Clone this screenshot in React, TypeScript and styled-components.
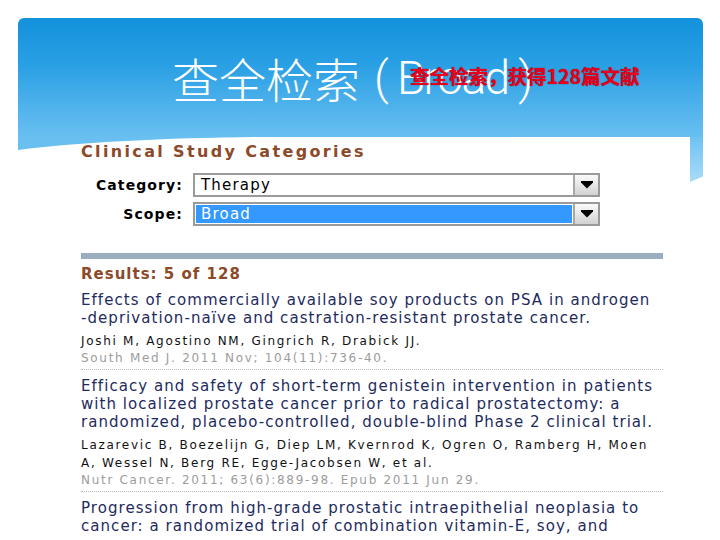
import React from 'react'
import styled, { createGlobalStyle } from 'styled-components'

const GlobalStyle = createGlobalStyle`
  html, body {
    margin: 0;
    padding: 0;
    background: #fff;
    overflow: hidden;
  }
`

const Slide = styled.div`
  width: 685px;
  margin: 18px 0 0 18px;
  display: flex;
  flex-direction: column;
`

const Header = styled.header`
  position: relative;
  height: 119px;
  padding-left: 154px;
  display: flex;
  align-items: center;
  border-radius: 6px 6px 0 0;
  background: linear-gradient(180deg, #1391dc 0%, #2aa0e4 40%, #55b5ed 80%, #68bff0 100%);
`

const Title = styled.h1`
  margin: 0;
  color: #fff;
  font-family: 'Noto Sans CJK SC', 'Noto Sans', sans-serif;
  font-weight: 300;
  font-size: 47px;
  line-height: 1;
  white-space: nowrap;
  display: flex;
  align-items: center;
`

const Latin = styled.span`
  margin-left: 14px;
  font-family: Roboto, 'Noto Sans', sans-serif;
  font-weight: 300;
  font-size: 46px;
  letter-spacing: -1.5px;
  white-space: pre;
`

const Note = styled.div`
  position: absolute;
  left: 392px;
  top: 45px;
  color: #e6001e;
  font-family: 'Noto Sans CJK SC', sans-serif;
  font-weight: 700;
  font-size: 19.5px;
  line-height: 26px;
  white-space: nowrap;
  text-shadow: 0 0 1px #6a0008;
`

const Wedge = styled.svg`
  position: absolute;
  left: 0;
  top: 100%;
  display: block;
`

const Body = styled.div`
  display: flex;
  align-items: flex-start;
`

const Shot = styled.main`
  flex: 1;
  padding: 5px 27px 0 63px;
  font-family: 'DejaVu Sans', 'Liberation Sans', sans-serif;
`

const Edge = styled.div`
  width: 13px;
  height: 45px;
  background: linear-gradient(180deg, #6fc2f2, #a9dbf8);
  clip-path: polygon(0 0, 100% 0, 100% 88%, 0 100%);
`

const SectionHead = styled.h2<{ $size: number; $spacing: number }>`
  margin: 0;
  color: #8b4a2a;
  font-size: ${p => p.$size}px;
  letter-spacing: ${p => p.$spacing}px;
  font-weight: 700;
  line-height: 20px;
  white-space: nowrap;
`

const Form = styled.div`
  margin-top: 11px;
  display: grid;
  grid-template-columns: 102px 407px;
  column-gap: 10px;
  row-gap: 5px;
  align-items: center;
`

const Label = styled.label`
  justify-self: end;
  color: #000;
  font-size: 14px;
  font-weight: 700;
  letter-spacing: 1.1px;
  margin-left: 15px;
`

const SelectBox = styled.div`
  display: flex;
  height: 24px;
  box-sizing: border-box;
  border: 2px solid #9a9a9a;
  background: #fff;
`

const Value = styled.div<{ $selected?: boolean }>`
  flex: 1;
  margin: 1px;
  padding-left: 5px;
  display: flex;
  align-items: center;
  font-size: 15px;
  letter-spacing: 1.2px;
  color: ${p => (p.$selected ? '#fff' : '#000')};
  background: ${p => (p.$selected ? '#3399ff' : '#fff')};
`

const Arrow = styled.div`
  width: 25px;
  box-sizing: border-box;
  border-left: 2px solid #a8a8a8;
  background: linear-gradient(180deg, #fafafa, #d2d2d2);
  display: flex;
  align-items: center;
  justify-content: center;
`

const Rule = styled.div`
  margin-top: 27px;
  height: 6px;
  background: #9aaec0;
`

const Results = styled(SectionHead)`
  margin-top: 6px;
  line-height: 18px;
`

const List = styled.div`
  display: flex;
  flex-direction: column;
  padding-top: 1px;
`

const Item = styled.article`
  margin-top: 7px;
`

const ItemTitle = styled.div`
  color: #1e2b5e;
  font-size: 15px;
  letter-spacing: 1.05px;
  line-height: 18px;
  white-space: nowrap;
`

const Authors = styled.div`
  margin-top: 5px;
  color: #111;
  font-size: 12px;
  letter-spacing: 1.7px;
  line-height: 18px;
  white-space: nowrap;
`

const Cite = styled.div`
  color: #9c9c9c;
  font-size: 12px;
  letter-spacing: 1.7px;
  line-height: 17px;
  white-space: nowrap;
`

const Divider = styled.hr`
  margin: 2px 0 0;
  border: 0;
  border-top: 1px dotted #b8b8b8;
`

type Paper = {
  title: string[]
  authors?: string[]
  cite?: string
}

const papers: Paper[] = [
  {
    title: [
      'Effects of commercially available soy products on PSA in androgen',
      '-deprivation-naïve and castration-resistant prostate cancer.',
    ],
    authors: ['Joshi M, Agostino NM, Gingrich R, Drabick JJ.'],
    cite: 'South Med J. 2011 Nov; 104(11):736-40.',
  },
  {
    title: [
      'Efficacy and safety of short-term genistein intervention in patients',
      'with localized prostate cancer prior to radical prostatectomy: a',
      'randomized, placebo-controlled, double-blind Phase 2 clinical trial.',
    ],
    authors: [
      'Lazarevic B, Boezelijn G, Diep LM, Kvernrod K, Ogren O, Ramberg H, Moen',
      'A, Wessel N, Berg RE, Egge-Jacobsen W, et al.',
    ],
    cite: 'Nutr Cancer. 2011; 63(6):889-98. Epub 2011 Jun 29.',
  },
  {
    title: [
      'Progression from high-grade prostatic intraepithelial neoplasia to',
      'cancer: a randomized trial of combination vitamin-E, soy, and',
    ],
  },
]

function Lines({ lines }: { lines: string[] }) {
  return (
    <>
      {lines.map((l, i) => (
        <div key={i}>{l}</div>
      ))}
    </>
  )
}

function Select({ value, selected }: { value: string; selected?: boolean }) {
  return (
    <SelectBox>
      <Value $selected={selected}>{value}</Value>
      <Arrow>
        <svg width="12" height="8" viewBox="0 0 12 8">
          <path d="M0 0H12V1.5L6 7.5L0 1.5Z" fill="#000" />
        </svg>
      </Arrow>
    </SelectBox>
  )
}

export default function App() {
  return (
    <>
      <GlobalStyle />
      <Slide>
        <Header>
          <Title>
            查全检索<Latin>( Broad )</Latin>
          </Title>
          <Note>查全检索，获得128篇文献</Note>
          <Wedge width="240" height="13" viewBox="0 0 240 13">
            <path d="M0 0H240C150 1 60 5 0 13Z" fill="#68bff0" />
          </Wedge>
        </Header>
        <Body>
          <Shot>
            <SectionHead $size={16} $spacing={2.35}>
              Clinical Study Categories
            </SectionHead>
            <Form>
              <Label>Category:</Label>
              <Select value="Therapy" />
              <Label>Scope:</Label>
              <Select value="Broad" selected />
            </Form>
            <Rule />
            <Results $size={15} $spacing={1}>
              Results: 5 of 128
            </Results>
            <List>
              {papers.map((p, i) => (
                <Item key={i}>
                  <ItemTitle>
                    <Lines lines={p.title} />
                  </ItemTitle>
                  {p.authors && (
                    <Authors>
                      <Lines lines={p.authors} />
                    </Authors>
                  )}
                  {p.cite && <Cite>{p.cite}</Cite>}
                  {p.cite && <Divider />}
                </Item>
              ))}
            </List>
          </Shot>
          <Edge />
        </Body>
      </Slide>
    </>
  )
}
